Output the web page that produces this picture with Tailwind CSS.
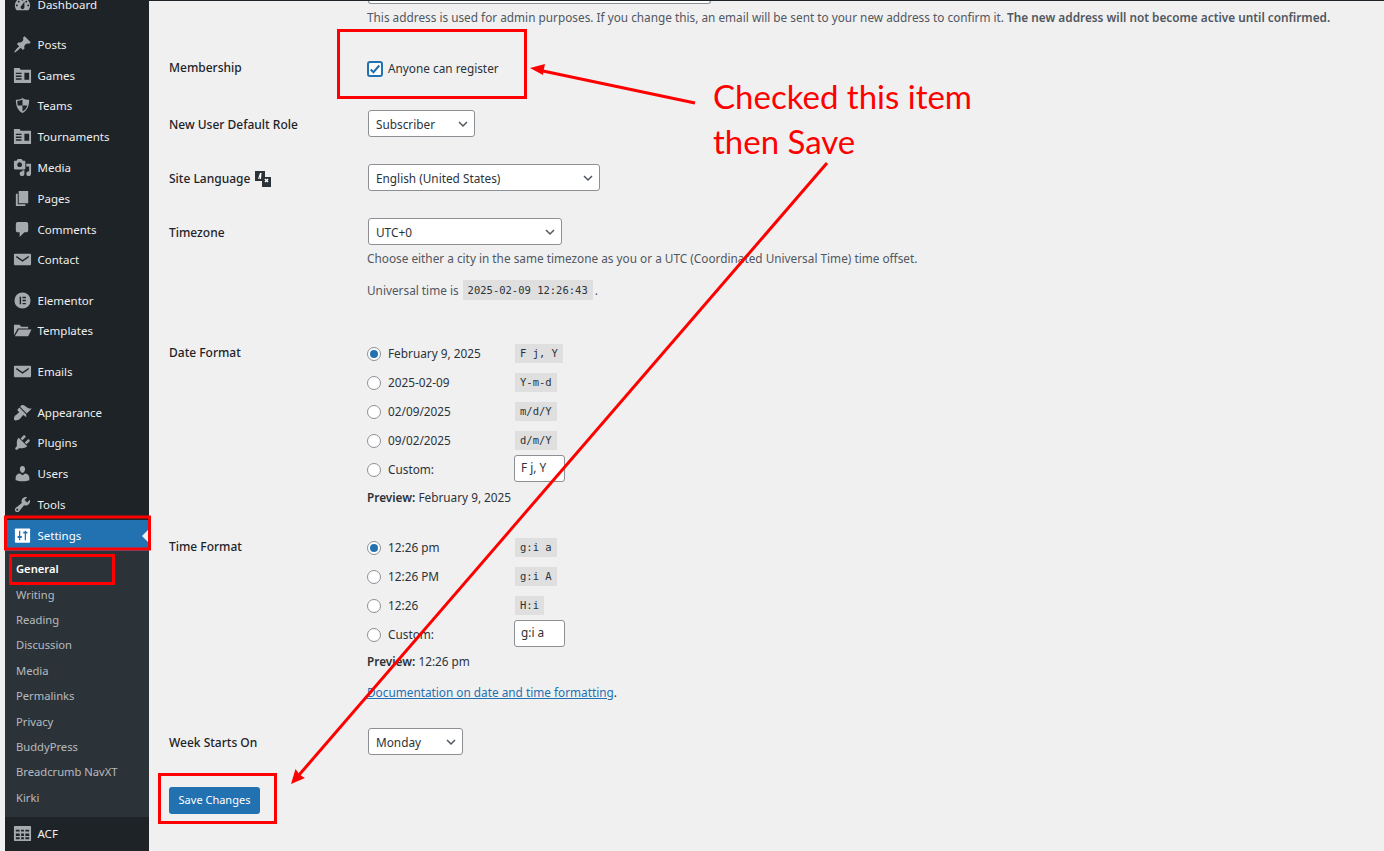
<!DOCTYPE html>
<html lang="en">
<head>
<meta charset="UTF-8">
<title>General Settings</title>
<script src="https://cdn.jsdelivr.net/npm/@tailwindcss/browser@4"></script>
</head>
<body class="bg-[#f0f0f1] font-['Noto_Sans',sans-serif] text-[11.8px] text-[#1d2327] overflow-hidden">
<div class="relative flex h-[851px] w-[1384px] overflow-hidden">

  <!-- sidebar -->
  <aside class="ml-[5px] w-[144px] h-[851px] shrink-0 bg-[#1d2327] text-[#f0f0f1] text-[11.5px] overflow-hidden">
    <ul class="-mt-[11.2px] flex flex-col">
      <li class="flex items-center h-[30.8px] pl-[7.5px] gap-[6px] mb-[9.4px]"><svg class="w-[19px] h-[19px] fill-[#a7aaad]" viewBox="0 0 20 20"><path fill-rule="evenodd" d="M3.76 16h12.48c1.1-1.37 1.76-3.11 1.76-5 0-4.42-3.58-8-8-8s-8 3.58-8 8c0 1.89.66 3.63 1.76 5zM10 4c.55 0 1 .45 1 1s-.45 1-1 1-1-.45-1-1 .45-1 1-1zM6 6c.55 0 1 .45 1 1s-.45 1-1 1-1-.45-1-1 .45-1 1-1zm8 0c.55 0 1 .45 1 1s-.45 1-1 1-1-.45-1-1 .45-1 1-1zm-5.37 5.55L12 7v6c0 1.1-.9 2-2 2s-2-.9-2-2c0-.57.24-1.08.63-1.45zM4 10c.55 0 1 .45 1 1s-.45 1-1 1-1-.45-1-1 .45-1 1-1zm12 0c.55 0 1 .45 1 1s-.45 1-1 1-1-.45-1-1 .45-1 1-1z"/></svg>Dashboard</li>
      <li class="flex items-center h-[30.8px] pl-[7.5px] gap-[6px]"><svg class="w-[19px] h-[19px] fill-[#a7aaad]" viewBox="0 0 20 20"><path d="M10.44 3.02l1.82-1.82 6.36 6.35-1.83 1.82c-1.05-.68-2.48-.57-3.41.36l-.75.75c-.92.93-1.04 2.35-.35 3.41l-1.83 1.82-2.41-2.41-2.8 2.79c-.42.42-3.38 2.71-3.8 2.29s1.86-3.39 2.28-3.81l2.79-2.79L4.1 9.36l1.83-1.82c1.05.69 2.48.57 3.4-.36l.75-.75c.93-.92 1.05-2.35.36-3.41z"/></svg>Posts</li>
      <li class="flex items-center h-[30.8px] pl-[7.5px] gap-[6px]"><svg class="w-[19px] h-[19px] fill-[#a7aaad]" viewBox="0 0 20 20"><path fill-rule="evenodd" d="M1 2h6l1 2h11v14H1zM3 7v1.500h6V7zm0 3v1.500h6V10zm0 3v1.500h6V13zm9-6v7.500h5V7z"/></svg>Games</li>
      <li class="flex items-center h-[30.8px] pl-[7.5px] gap-[6px]"><svg class="w-[19px] h-[19px] fill-[#a7aaad]" viewBox="0 0 20 20"><path fill-rule="evenodd" d="M10 2c2 1.500 4.500 2 7 2 0 6-1.500 11-7 14C4.500 15 3 10 3 4c2.500 0 5-.5 7-2zm0 1.800C8.500 4.700 6.500 5.300 4.500 5.400 4.600 6.800 4.700 8 5 10h5zM10 10v6.200c3-1.700 4.400-3.600 5-6.200z"/></svg>Teams</li>
      <li class="flex items-center h-[30.8px] pl-[7.5px] gap-[6px]"><svg class="w-[19px] h-[19px] fill-[#a7aaad]" viewBox="0 0 20 20"><path fill-rule="evenodd" d="M1 2h6l1 2h11v14H1zM3 7v1.500h6V7zm0 3v1.500h6V10zm0 3v1.500h6V13zm9-6v7.500h5V7z"/></svg>Tournaments</li>
      <li class="flex items-center h-[30.8px] pl-[7.5px] gap-[6px]"><svg class="w-[19px] h-[19px] fill-[#a7aaad]" viewBox="0 0 20 20"><path d="M13 11V4c0-.55-.45-1-1-1h-1.670L9 1H5L3.670 3H2c-.55 0-1 .45-1 1v7c0 .55.45 1 1 1h10c.55 0 1-.45 1-1zM7 4.500c1.380 0 2.500 1.120 2.500 2.500S8.380 9.500 7 9.500 4.500 8.380 4.500 7 5.620 4.500 7 4.500zM14 6h5v10.500c0 1.380-1.120 2.500-2.500 2.500S14 17.880 14 16.500s1.120-2.500 2.500-2.500c.17 0 .34.020.5.050V9h-3V6zm-4 8.050V13h2v3.500c0 1.380-1.120 2.500-2.500 2.500S7 17.880 7 16.500 8.120 14 9.500 14c.17 0 .34.020.5.050z"/></svg>Media</li>
      <li class="flex items-center h-[30.8px] pl-[7.5px] gap-[6px]"><svg class="w-[19px] h-[19px] fill-[#a7aaad]" viewBox="0 0 20 20"><path d="M6 15V2h10v13H6zm-1 1h8v2H3V5h2v11z"/></svg>Pages</li>
      <li class="flex items-center h-[30.8px] pl-[7.5px] gap-[6px]"><svg class="w-[19px] h-[19px] fill-[#a7aaad]" viewBox="0 0 20 20"><path d="M5 2h9c1.100 0 2 .9 2 2v7c0 1.100-.9 2-2 2h-2l-5 5v-5H5c-1.100 0-2-.9-2-2V4c0-1.100.9-2 2-2z"/></svg>Comments</li>
      <li class="flex items-center h-[30.8px] pl-[7.5px] gap-[6px] mb-[9.4px]"><svg class="w-[19px] h-[19px] fill-[#a7aaad]" viewBox="0 0 20 20"><path fill-rule="evenodd" d="M2 4h16c.55 0 1 .45 1 1v10c0 .55-.45 1-1 1H2c-.55 0-1-.45-1-1V5c0-.55.45-1 1-1zm8 6.500L3.500 6v1.800L10 12.300l6.500-4.500V6z"/></svg>Contact</li>
      <li class="flex items-center h-[30.8px] pl-[7.5px] gap-[6px]"><svg class="w-[19px] h-[19px] fill-[#a7aaad]" viewBox="0 0 20 20"><path fill-rule="evenodd" d="M10 1.500a8.500 8.500 0 1 1 0 17 8.500 8.500 0 0 1 0-17zM7 6v8h1.500V6zm3 0v1.500h3.500V6zm0 3.250v1.500h3.500v-1.500zm0 3.250V14h3.500v-1.500z"/></svg>Elementor</li>
      <li class="flex items-center h-[30.8px] pl-[7.5px] gap-[6px] mb-[10.2px]"><svg class="w-[19px] h-[19px] fill-[#a7aaad]" viewBox="0 0 20 20"><path d="M1 4h6l1.500 2H16v2H5L1 15zM6 9h13.500L16 16H2z"/></svg>Templates</li>
      <li class="flex items-center h-[30.8px] pl-[7.5px] gap-[6px] mb-[9.4px]"><svg class="w-[19px] h-[19px] fill-[#a7aaad]" viewBox="0 0 20 20"><path fill-rule="evenodd" d="M2 4h16c.55 0 1 .45 1 1v10c0 .55-.45 1-1 1H2c-.55 0-1-.45-1-1V5c0-.55.45-1 1-1zm8 6.500L3.500 6v1.800L10 12.300l6.500-4.500V6z"/></svg>Emails</li>
      <li class="flex items-center h-[30.8px] pl-[7.5px] gap-[6px]"><svg class="w-[19px] h-[19px] fill-[#a7aaad]" viewBox="0 0 20 20"><path d="M14.480 11.060L7.410 3.990l1.500-1.500c.5-.56 2.300-.47 3.510.32 1.210.8 1.430 1.280 2.910 2.100 1.180.64 2.450 1.260 4.450.85zm-.71.71L6.700 4.700 4.930 6.470c-.39.39-.39 1.020 0 1.410l1.060 1.060c.39.39.39 1.030 0 1.420-.6.6-1.430 1.110-2.210 1.690-.35.26-.7.53-1.010.84C1.430 13.230.5 17 1.500 18s4.600-.1 6.200-1.680c.31-.31.58-.66.84-1.010.58-.78 1.090-1.610 1.690-2.210.39-.39 1.030-.39 1.420 0l1.060 1.060c.39.39 1.020.39 1.410 0z"/></svg>Appearance</li>
      <li class="flex items-center h-[30.8px] pl-[7.5px] gap-[6px]"><svg class="w-[19px] h-[19px] fill-[#a7aaad]" viewBox="0 0 20 20"><path d="M13.110 4.360L9.870 7.600 8 5.730l3.240-3.240c.35-.34 1.050-.2 1.560.32.52.51.66 1.210.31 1.550zm-8 1.770l.91-1.120 9.010 9.010-1.190.84c-.71.71-2.630 1.160-3.820 1.160H6.140L4.900 17.260c-.59.59-1.540.59-2.120 0-.59-.58-.59-1.530 0-2.120l1.240-1.240v-3.880c0-1.130.4-3.190 1.090-3.890zm7.260 3.970l3.240-3.240c.34-.35 1.040-.21 1.550.31.52.51.66 1.210.31 1.550l-3.240 3.250z"/></svg>Plugins</li>
      <li class="flex items-center h-[30.8px] pl-[7.5px] gap-[6px]"><svg class="w-[19px] h-[19px] fill-[#a7aaad]" viewBox="0 0 20 20"><path d="M10 9.250c-2.270 0-2.730-3.440-2.730-3.440C7 4.020 7.820 2 9.970 2c2.160 0 2.980 2.020 2.710 3.810 0 0-.41 3.440-2.680 3.440zm0 2.570L12.720 10c2.390 0 4.520 2.330 4.520 4.530v2.490s-3.650 1.130-7.240 1.130c-3.650 0-7.240-1.130-7.240-1.130v-2.490c0-2.250 1.940-4.480 4.470-4.480z"/></svg>Users</li>
      <li class="flex items-center h-[30.8px] pl-[7.5px] gap-[6px]"><svg class="w-[19px] h-[19px] fill-[#a7aaad]" viewBox="0 0 20 20"><path d="M16.680 9.770c-1.340 1.340-3.300 1.670-4.950.99l-5.410 6.520c-.99.99-2.590.99-3.580 0s-.99-2.590 0-3.570l6.520-5.420c-.68-1.650-.35-3.610.99-4.950 1.280-1.280 3.120-1.620 4.720-1.060l-2.890 2.890 2.820 2.820 2.860-2.870c.53 1.580.18 3.390-1.080 4.650zM3.810 16.210c.4.39 1.040.39 1.430 0 .4-.4.4-1.040 0-1.430-.39-.4-1.030-.4-1.430 0-.39.39-.39 1.030 0 1.430z"/></svg>Tools</li>
      <li class="relative flex items-center h-[30.8px] pl-[7.5px] gap-[6px] bg-[#2271b1] text-white"><svg class="w-[19px] h-[19px]" viewBox="0 0 20 20"><rect x="2" y="2.500" width="16" height="15" rx="1" fill="#fff"/><path d="M7 5v10M13 5v10" stroke="#2271b1" stroke-width="1.300"/><path d="M4.800 11.500h4.400M10.800 7h4.400" stroke="#2271b1" stroke-width="2"/></svg>Settings<span class="absolute right-0 top-[9px] w-0 h-0 border-y-[7px] border-y-transparent border-r-[7px] border-r-[#f0f0f1]"></span></li>
    </ul>
    <ul class="bg-[#2c3338] pt-[6.3px] pb-[6px] pl-[11px] text-[11.2px] text-[#f0f6fc]/70 flex flex-col">
      <li class="h-[25.4px] flex items-center font-semibold text-white">General</li>
      <li class="h-[25.4px] flex items-center">Writing</li>
      <li class="h-[25.4px] flex items-center">Reading</li>
      <li class="h-[25.4px] flex items-center">Discussion</li>
      <li class="h-[25.4px] flex items-center">Media</li>
      <li class="h-[25.4px] flex items-center">Permalinks</li>
      <li class="h-[25.4px] flex items-center">Privacy</li>
      <li class="h-[25.4px] flex items-center">BuddyPress</li>
      <li class="h-[25.4px] flex items-center">Breadcrumb NavXT</li>
      <li class="h-[25.4px] flex items-center">Kirki</li>
    </ul>
    <div class="flex items-center h-[33px] pl-[7.5px] gap-[6px]"><svg class="w-[19px] h-[19px] fill-[#a7aaad]" viewBox="0 0 20 20"><path fill-rule="evenodd" d="M2 2h16c.55 0 1 .45 1 1v14c0 .55-.45 1-1 1H2c-.55 0-1-.45-1-1V3c0-.55.45-1 1-1zm1 4v2h4V6zm5.500 0v2h3V6zm4.500 0v2h4V6zM3 10v2.500h4V10zm5.500 0v2.500h3V10zm4.500 0v2.500h4V10zM3 14v2h4v-2zm5.500 0v2h3v-2zm4.500 0v2h4v-2z"/></svg>ACF</div>
  </aside>

  <!-- settings form -->
  <main class="flex-1 min-w-0">
    <div class="h-px bg-[#1d2327]"></div>
    <div class="ml-[219px] w-[343px] h-[3px] bg-white border border-t-0 border-[#8c8f94] rounded-b-[3px]"></div>
    <div class="pl-[20px]">
      <div class="h-[26px] pl-[198px] pt-[2px] flex items-center text-[#50575e] whitespace-nowrap">
        <p>This address is used for admin purposes. If you change this, an email will be sent to your new address to confirm it. <strong class="font-semibold">The new address will not become active until confirmed.</strong></p>
      </div>

      <div class="flex h-[75px] items-center">
        <div class="w-[199px] text-[12px] font-medium">Membership</div>
        <label class="flex items-center gap-[5px] pt-[2px] text-[#2c3338]">
          <span class="w-[16px] h-[16px] ml-[-1px] flex items-center justify-center bg-white border-2 border-[#2271b1] rounded-[3px]">
            <svg class="w-[12px] h-[12px]" viewBox="0 0 14 14"><path d="M2 7.500l3.200 3.200L12 3" fill="none" stroke="#2271b1" stroke-width="2.500"/></svg>
          </span>
          Anyone can register
        </label>
      </div>

      <div class="flex h-[59px] pt-[5px]">
        <div class="w-[199px] text-[12px] leading-[29px] font-medium">New User Default Role</div>
        <div class="w-[107px] h-[27px] pl-[7px] pr-[5px] pt-[2px] flex items-center justify-between bg-white border border-[#8c8f94] rounded-[3px] text-[#2c3338]">Subscriber
          <svg class="w-[12px] h-[12px] -mt-[2px]" viewBox="0 0 12 12"><path d="M2 4l4 4 4-4" fill="none" stroke="#50575e" stroke-width="1.500"/></svg>
        </div>
      </div>

      <div class="flex h-[54px]">
        <div class="w-[199px] text-[12px] font-medium flex items-center gap-[4px] h-[27px] pt-[2px]">Site Language
          <svg class="w-[18px] h-[18px]" viewBox="0 0 18 18"><path fill="#2c3338" d="M1 1h10v10H1z"/><path fill="#2c3338" d="M8 7h9v10H8z"/><path fill="#fff" d="M4 9l2-6h1.500l-.5 6H5.500l.1-1.500H5L4.800 9zM10.500 9.500l1-1 1 1 1-1 1 1-1 1 1 1-1 1-1-1-1 1-1-1 1-1z"/></svg>
        </div>
        <div class="w-[232px] h-[27px] pl-[7px] pr-[5px] pt-[2px] flex items-center justify-between bg-white border border-[#8c8f94] rounded-[3px] text-[#2c3338]">English (United States)
          <svg class="w-[12px] h-[12px] -mt-[2px]" viewBox="0 0 12 12"><path d="M2 4l4 4 4-4" fill="none" stroke="#50575e" stroke-width="1.500"/></svg>
        </div>
      </div>

      <div class="flex h-[121px]">
        <div class="w-[199px] text-[12px] leading-[29px] font-medium">Timezone</div>
        <div class="text-[#50575e]">
          <div class="w-[194px] h-[27px] pl-[7px] pr-[5px] pt-[2px] flex items-center justify-between bg-white border border-[#8c8f94] rounded-[3px] text-[#2c3338]">UTC+0
            <svg class="w-[12px] h-[12px] -mt-[2px]" viewBox="0 0 12 12"><path d="M2 4l4 4 4-4" fill="none" stroke="#50575e" stroke-width="1.500"/></svg>
          </div>
          <p class="mt-[3px] h-[20px] leading-[20px] -ml-px whitespace-nowrap">Choose either a city in the same timezone as you or a UTC (Coordinated Universal Time) time offset.</p>
          <p class="mt-[12px] h-[20px] leading-[20px] -ml-px flex items-center whitespace-nowrap">Universal time is <code class="ml-[4px] mr-[2px] font-['DejaVu_Sans_Mono',monospace] text-[10.5px] bg-black/7 px-[5px] leading-[20px] text-[#2c3338]">2025-02-09 12:26:43</code>.</p>
        </div>
      </div>

      <div class="flex h-[194px]">
        <div class="w-[199px] text-[12px] leading-[27px] font-medium">Date Format</div>
        <div class="text-[#2c3338] -ml-px">
          <div class="h-[29px] flex items-center"><span class="w-[14px] h-[14px] rounded-full bg-white border border-[#8c8f94] flex items-center justify-center"><span class="w-[8px] h-[8px] rounded-full bg-[#2271b1]"></span></span><span class="ml-[7px] w-[127px]">February 9, 2025</span><code class="font-['DejaVu_Sans_Mono',monospace] text-[10.5px] bg-black/7 px-[5px] leading-[19px]">F j, Y</code></div>
          <div class="h-[29px] flex items-center"><span class="w-[14px] h-[14px] rounded-full bg-white border border-[#8c8f94]"></span><span class="ml-[7px] w-[127px]">2025-02-09</span><code class="font-['DejaVu_Sans_Mono',monospace] text-[10.5px] bg-black/7 px-[5px] leading-[19px]">Y-m-d</code></div>
          <div class="h-[29px] flex items-center"><span class="w-[14px] h-[14px] rounded-full bg-white border border-[#8c8f94]"></span><span class="ml-[7px] w-[127px]">02/09/2025</span><code class="font-['DejaVu_Sans_Mono',monospace] text-[10.5px] bg-black/7 px-[5px] leading-[19px]">m/d/Y</code></div>
          <div class="h-[29px] flex items-center"><span class="w-[14px] h-[14px] rounded-full bg-white border border-[#8c8f94]"></span><span class="ml-[7px] w-[127px]">09/02/2025</span><code class="font-['DejaVu_Sans_Mono',monospace] text-[10.5px] bg-black/7 px-[5px] leading-[19px]">d/m/Y</code></div>
          <div class="h-[29px] flex items-center"><span class="w-[14px] h-[14px] rounded-full bg-white border border-[#8c8f94]"></span><span class="ml-[7px] w-[127px]">Custom:</span><div class="-ml-px mb-[3px] w-[51px] h-[27px] px-[6px] bg-white border border-[#8c8f94] rounded-[3px] flex items-center">F j, Y</div></div>
          <p class="h-[27px] leading-[27px]"><strong class="font-semibold">Preview:</strong> February 9, 2025</p>
        </div>
      </div>

      <div class="flex">
        <div class="w-[199px] text-[12px] leading-[27px] font-medium">Time Format</div>
        <div class="text-[#2c3338] -ml-px">
          <div class="h-[29px] flex items-center"><span class="w-[14px] h-[14px] rounded-full bg-white border border-[#8c8f94] flex items-center justify-center"><span class="w-[8px] h-[8px] rounded-full bg-[#2271b1]"></span></span><span class="ml-[7px] w-[127px]">12:26 pm</span><code class="font-['DejaVu_Sans_Mono',monospace] text-[10.5px] bg-black/7 px-[5px] leading-[19px]">g:i a</code></div>
          <div class="h-[29px] flex items-center"><span class="w-[14px] h-[14px] rounded-full bg-white border border-[#8c8f94]"></span><span class="ml-[7px] w-[127px]">12:26 PM</span><code class="font-['DejaVu_Sans_Mono',monospace] text-[10.5px] bg-black/7 px-[5px] leading-[19px]">g:i A</code></div>
          <div class="h-[29px] flex items-center"><span class="w-[14px] h-[14px] rounded-full bg-white border border-[#8c8f94]"></span><span class="ml-[7px] w-[127px]">12:26</span><code class="font-['DejaVu_Sans_Mono',monospace] text-[10.5px] bg-black/7 px-[5px] leading-[19px]">H:i</code></div>
          <div class="h-[29px] flex items-center"><span class="w-[14px] h-[14px] rounded-full bg-white border border-[#8c8f94]"></span><span class="ml-[7px] w-[127px]">Custom:</span><div class="-ml-px mb-[3px] w-[51px] h-[27px] px-[6px] bg-white border border-[#8c8f94] rounded-[3px] flex items-center">g:i a</div></div>
          <p class="h-[25px] leading-[25px]"><strong class="font-semibold">Preview:</strong> 12:26 pm</p>
          <p class="mt-[8px] h-[20px] leading-[20px]"><a class="text-[#2271b1] underline">Documentation on date and time formatting</a>.</p>
        </div>
      </div>

      <div class="flex mt-[26px]">
        <div class="w-[199px] text-[12px] leading-[29px] font-medium">Week Starts On</div>
        <div class="w-[95px] h-[27px] pl-[7px] pr-[5px] pt-[2px] flex items-center justify-between bg-white border border-[#8c8f94] rounded-[3px] text-[#2c3338]">Monday
          <svg class="w-[12px] h-[12px] -mt-[2px]" viewBox="0 0 12 12"><path d="M2 4l4 4 4-4" fill="none" stroke="#50575e" stroke-width="1.500"/></svg>
        </div>
      </div>

      <button class="mt-[30px] w-[91px] h-[27px] bg-[#2271b1] text-white rounded-[3px] text-[11px]">Save Changes</button>
    </div>
  </main>

  <!-- red annotations drawn on top of the screenshot -->
  <svg class="absolute left-0 top-0 pointer-events-none" width="1384" height="851" viewBox="0 0 1384 851">
    <g fill="none" stroke="#ff0000" stroke-width="3">
      <rect x="338.500" y="30.500" width="187" height="67"/>
      <rect x="5.500" y="517" width="144" height="32"/>
      <rect x="10.500" y="555.500" width="103" height="28"/>
      <rect x="159.500" y="774.500" width="116" height="48"/>
      <path d="M695 103L543 71"/>
      <path d="M827 163L299 775"/>
    </g>
    <path fill="#ff0000" d="M530 68L545 64L543.500 71L543 75z"/>
    <path fill="#ff0000" d="M291 784L295.500 769L300 775L305 778z"/>
  </svg>
  <div class="absolute left-[713px] top-[74px] text-[#ff0000] text-[33px] leading-[44.500px] font-['Lato',sans-serif]">Checked this item<br>then Save</div>
</div>
</body>
</html>
